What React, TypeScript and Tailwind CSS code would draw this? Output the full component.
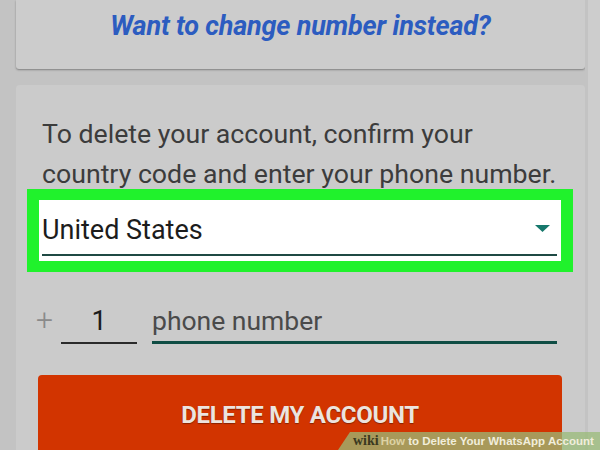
export default function App() {
  return (
    <div className="relative w-[600px] h-[450px] overflow-hidden bg-[#c3c3c3] flex font-['Roboto',sans-serif]">
      <div className="w-[16px] shrink-0" />
      <div className="w-[569px] flex flex-col gap-[16px]">
        <div className="h-[69px] shrink-0 bg-[#cccccc] rounded-b-[3px] shadow-[0_1px_2px_rgba(0,0,0,0.35)] flex justify-center pt-[9px]">
          <span className="text-[27px] leading-[34px] font-bold italic text-[#2c5cc0] tracking-[-0.2px]">
            Want to change number instead?
          </span>
        </div>

        <div className="flex-1 bg-[#cbcbcb] rounded-t-[4px] pt-[29px] flex flex-col">
          <p className="pl-[26px] text-[26.7px] leading-[40px] text-[#3c3c3c]">
            To delete your account, confirm your
            <br />
            country code and enter your phone number.
          </p>

          <div className="ml-[11px] mt-[-5px] w-[546px] border-[11px] border-x-[12px] border-[#20f22c] bg-white px-[3px]">
            <div className="h-[61px] flex flex-col">
              <div className="flex items-center justify-between pt-[12px] pr-[8px]">
                <span className="text-[27px] leading-[36px] text-[#1c1c1c]">United States</span>
                <svg width="15" height="7" viewBox="0 0 15 7" className="mb-[4px]">
                  <path d="M0 0 L15 0 L7.5 7 Z" fill="#16786c" />
                </svg>
              </div>
              <div className="mt-[6px] h-[2px] w-[515px] bg-[#1f4a44]" />
            </div>
          </div>

          <div className="mt-[28px] pl-[20px] flex items-end">
            <span className="w-[17px] text-[30px] leading-[40px] font-light text-[#8a8a8a] mb-[4px]">+</span>
            <div className="ml-[8px] w-[76px] border-b-[2px] border-[#2a2a2a] pb-[1px] text-center text-[27px] leading-[40px] text-[#1c1c1c]">
              1
            </div>
            <div className="ml-[15px] w-[405px] border-b-[3px] border-[#0f4d44] text-[26.5px] leading-[40px] text-[#4a4a4a]">
              phone number
            </div>
          </div>

          <div className="mt-[31px] ml-[22px] w-[524px] h-[80px] rounded-[4px] bg-[#d23400] flex justify-center pt-[26px]">
            <span className="text-[24px] leading-[29px] font-bold text-[#ece4df] tracking-[-0.3px] [text-shadow:0_1px_1px_rgba(0,0,0,0.35)]">
              DELETE MY ACCOUNT
            </span>
          </div>
        </div>
      </div>
      <div className="flex-1 flex">
        <div className="w-[3px] bg-[#c3c3c3]" />
        <div className="flex-1 bg-[#cdcdcd]" />
      </div>

      <div className="absolute right-0 bottom-0 w-[262px] h-[18px] bg-[rgba(154,187,120,0.75)] [clip-path:polygon(12px_0,100%_0,100%_100%,0_100%)] flex items-center pl-[15px] whitespace-nowrap">
        <span className="font-['Liberation_Serif',serif] font-bold text-[14px] leading-[18px] text-[#3b3a1f]">wiki</span>
        <span className="ml-[2px] font-['Liberation_Sans',sans-serif] font-bold text-[11.5px] leading-[18px] text-[#ddd2a4]">How</span>
        <span className="font-['Liberation_Sans',sans-serif] font-bold text-[11.5px] leading-[18px] text-[#f1eedc]">&nbsp;to Delete Your WhatsApp Account</span>
      </div>
    </div>
  )
}
